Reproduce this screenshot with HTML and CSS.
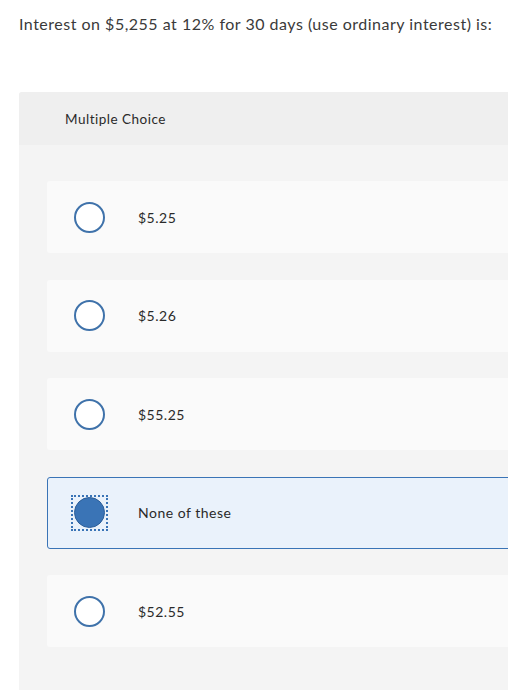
FILE: index.html
```html
<!DOCTYPE html>
<html>
<head>
<meta charset="utf-8">
<link rel="stylesheet" href="styles.css">
</head>
<body>
<div class="page">
  <p class="question">Interest on $5,255 at 12% for 30 days (use ordinary interest) is:</p>
  <section class="panel">
    <header class="panel-head">Multiple Choice</header>
    <div class="options">
      <div class="option"><span class="radio"></span><span class="label">$5.25</span></div>
      <div class="option"><span class="radio"></span><span class="label">$5.26</span></div>
      <div class="option"><span class="radio"></span><span class="label">$55.25</span></div>
      <div class="option selected"><span class="focus"><span class="radio"></span></span><span class="label">None of these</span></div>
      <div class="option"><span class="radio"></span><span class="label">$52.55</span></div>
    </div>
  </section>
</div>
</body>
</html>
```
FILE: styles.css
```css
html, body {
  margin: 0;
  padding: 0;
  background: #ffffff;
  overflow: hidden;
}
.page {
  font-family: Lato, "Open Sans", sans-serif;
  color: #3a3a3a;
  padding: 12px 0 0 19px;
  width: 489px;
}
.question {
  margin: 0;
  font-size: 16px;
  line-height: 24px;
  letter-spacing: 0.5px;
  white-space: nowrap;
}
.panel {
  margin-top: 56px;
  background: #f4f4f4;
  border-top-left-radius: 3px;
  width: 500px;
  height: 620px;
}
.panel-head {
  background: #efefef;
  height: 53px;
  padding-left: 46px;
  display: flex;
  align-items: center;
  font-size: 13.5px;
  letter-spacing: 0.5px;
  color: #2a2a2a;
  border-top-left-radius: 3px;
}
.options {
  padding: 36px 0 0 28px;
  display: flex;
  flex-direction: column;
  gap: 26.5px;
}
.option {
  height: 72px;
  background: #fafafa;
  border-radius: 3px;
  display: flex;
  align-items: center;
  padding-left: 27px;
  box-sizing: border-box;
}
.option.selected {
  background: #eaf2fb;
  border: 1px solid #3a74b6;
  padding-left: 23px;
}
.radio {
  width: 31px;
  height: 31px;
  box-sizing: border-box;
  border: 2px solid #3f72aa;
  border-radius: 50%;
  background: #ffffff;
  flex: none;
}
.focus {
  width: 37px;
  height: 36px;
  box-sizing: border-box;
  border: 2px dotted #3a74b6;
  display: flex;
  align-items: center;
  justify-content: center;
  flex: none;
}
.selected .radio {
  background: #3a74b6;
  border: 1px solid #2d5f99;
}
.label {
  margin-left: 33px;
  font-size: 14px;
  letter-spacing: 0.5px;
  color: #2a2a2a;
}
.selected .label {
  margin-left: 30px;
}
```
